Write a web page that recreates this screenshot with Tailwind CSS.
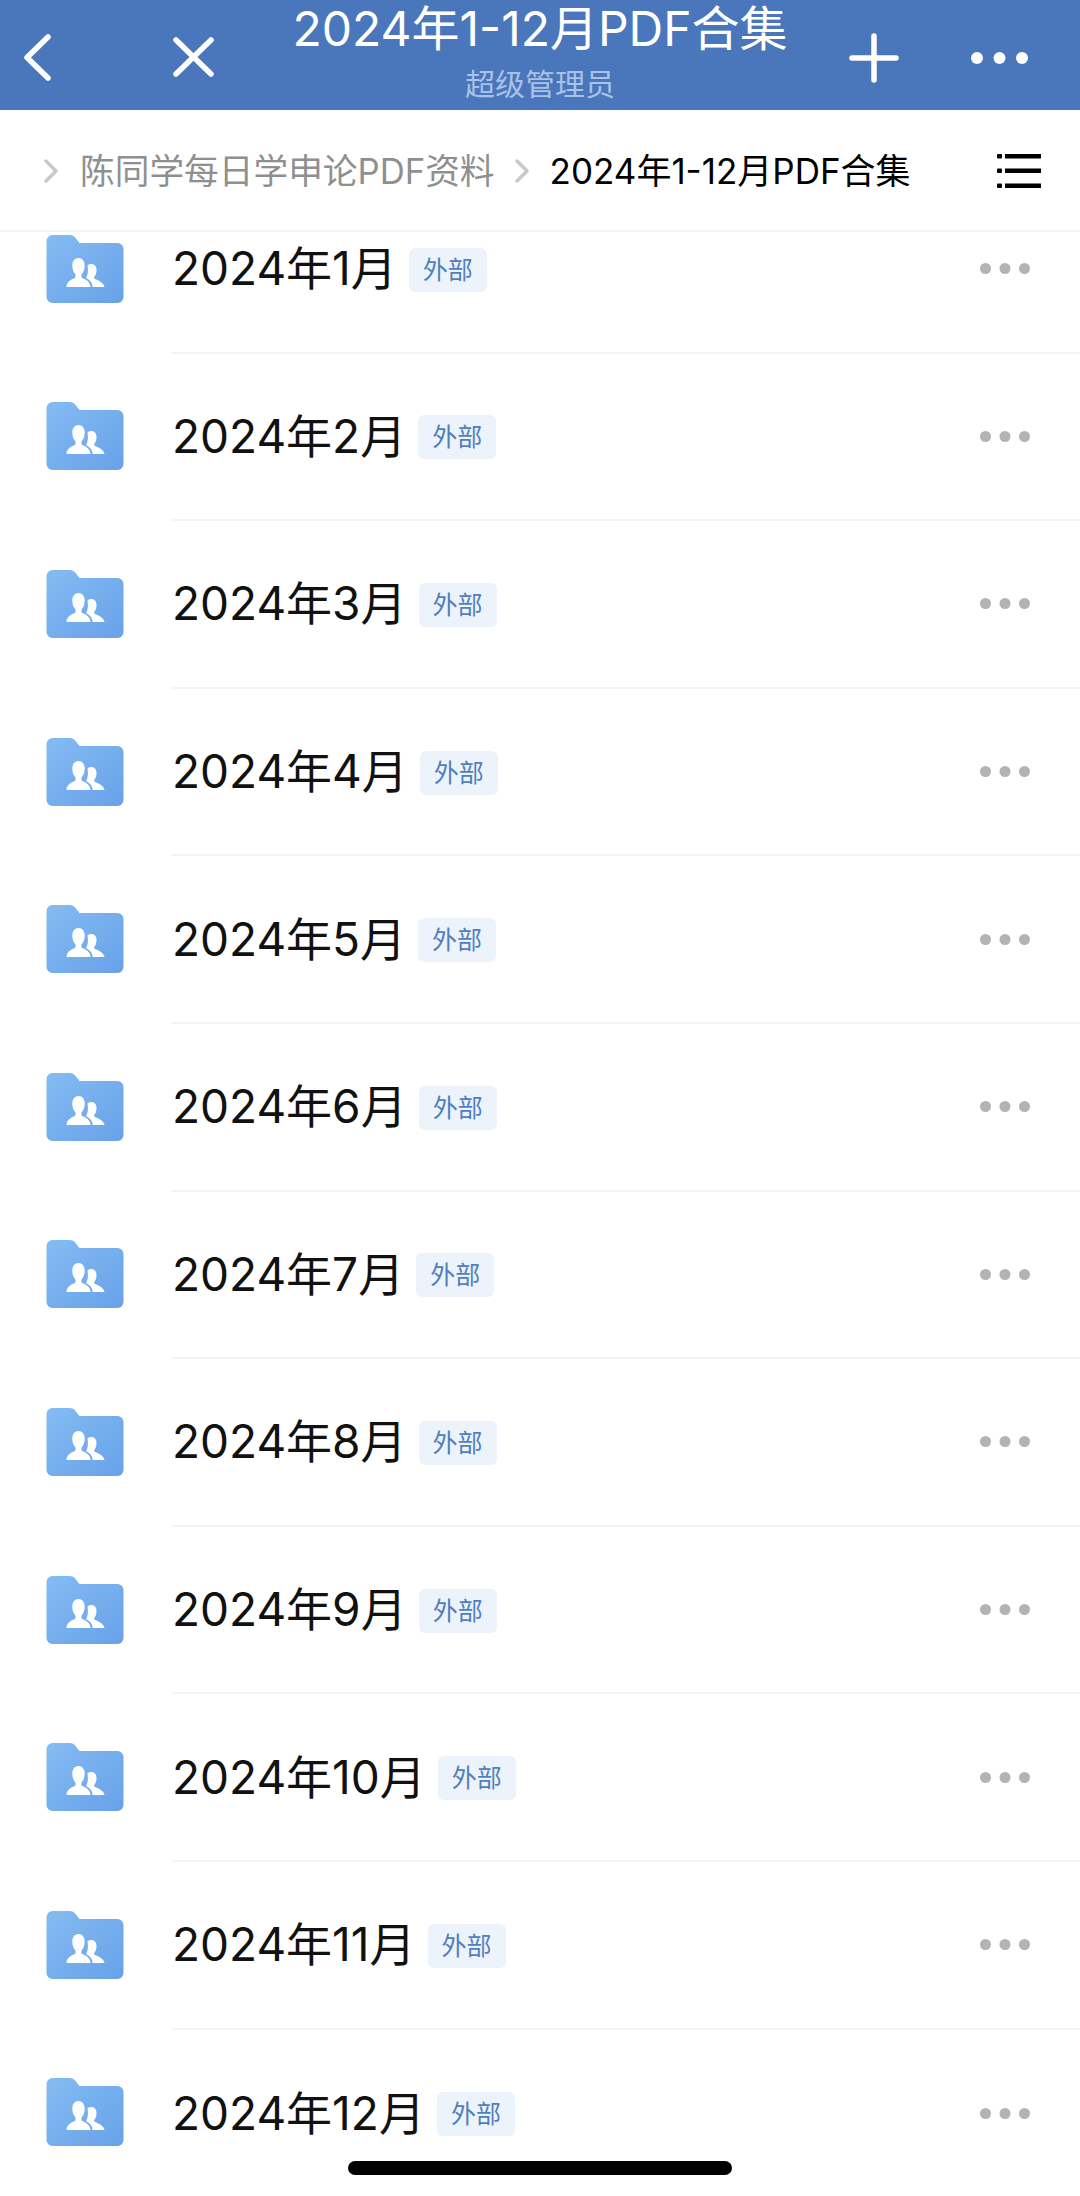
<!DOCTYPE html>
<html lang="zh-CN">
<head>
    <meta charset="UTF-8">
    <meta name="viewport" content="width=device-width, initial-scale=1.0">
    <title>2024年1-12月PDF合集</title>
    <script src="https://cdn.jsdelivr.net/npm/@tailwindcss/browser@4"></script>
</head>
<body class="relative h-[2196px] overflow-hidden bg-white font-['Inter','Noto_Sans_CJK_SC',sans-serif]">
    <svg class="absolute h-0 w-0">
        <defs>
            <linearGradient id="folderFill" x1="0" y1="0" x2="1" y2="1">
                <stop offset="0" stop-color="#84bcf3"/>
                <stop offset="1" stop-color="#68a1e8"/>
            </linearGradient>
            <symbol id="folder" viewBox="0 0 77 68">
                <path fill="url(#folderFill)" d="M0 6a6 6 0 0 1 6-6h17q4 0 6 3l4 5h38a6 6 0 0 1 6 6v48a6 6 0 0 1-6 6H6a6 6 0 0 1-6-6z"/>
                <path fill="#fff" d="M20 52c0-5 4-7 9-9.500v-3c-2-2-3.200-5-3.200-9 0-4.500 2.500-7.500 6.200-7.500s6.200 3 6.200 7.500c0 4-1.200 7-3.200 9v3c5 2.500 9 4.500 9 9.500z"/>
                <path fill="#fff" d="M41 30.500c1-1 2.300-1.500 3.800-1.500 3.300 0 5.200 2.500 5.200 6 0 3-.8 5.200-2.200 6.800v2c4 1.500 9.200 3.700 10.200 8.200h-12c0-4.500-2.500-6.500-6.500-9 1.500-2.500 2.500-6 1.500-12.500z"/>
            </symbol>
            <symbol id="more" viewBox="0 0 50 11">
                <circle cx="5.500" cy="5.500" r="5.500" fill="#b3b3b3"/>
                <circle cx="25" cy="5.500" r="5.500" fill="#b3b3b3"/>
                <circle cx="44.500" cy="5.500" r="5.500" fill="#b3b3b3"/>
            </symbol>
        </defs>
    </svg>

    <header class="grid h-[110px] grid-cols-[250px_1fr_250px] items-center bg-[#4a76bc] text-white">
        <div class="flex items-center pl-[23px] pt-[4px]">
            <svg class="h-[47px] w-[29px]" viewBox="0 0 29 47" fill="none" stroke="#fff" stroke-width="5.500" stroke-linecap="round" stroke-linejoin="round"><path d="M25 3 4 23.500 25 44"/></svg>
            <svg class="ml-[120px] h-[42px] w-[43px]" viewBox="0 0 43 42" fill="none" stroke="#fff" stroke-width="5.500" stroke-linecap="round"><path d="M4 4l35 34M39 4 4 38"/></svg>
        </div>
        <div class="flex flex-col items-center self-start pt-[1px]">
            <div class="text-[48px] leading-[56px] whitespace-nowrap">2024年1-12月PDF合集</div>
            <div class="mt-[9px] text-[30px] leading-[36px] text-[#a9c2e8]">超级管理员</div>
        </div>
        <div class="flex items-center justify-end pr-[52px] pt-[6px]">
            <svg class="h-[50px] w-[50px]" viewBox="0 0 50 50" fill="none" stroke="#fff" stroke-width="5.500" stroke-linecap="round"><path d="M25 3v44M3 25h44"/></svg>
            <svg class="ml-[72px] h-[12px] w-[57px]" viewBox="0 0 57 12" fill="#fff"><circle cx="6" cy="6" r="6"/><circle cx="28.500" cy="6" r="6"/><circle cx="51" cy="6" r="6"/></svg>
        </div>
    </header>

    <nav class="relative z-10 flex h-[122px] items-center border-b-2 border-[#f3f3f3] bg-white pl-[43px] pr-[39px] pt-[2px]">
        <svg class="h-[26px] w-[16px]" viewBox="0 0 16 26" fill="none" stroke="#c9c9c9" stroke-width="3.500" stroke-linecap="round" stroke-linejoin="round"><path d="M3 3l10 10L3 23"/></svg>
        <span class="ml-[21px] text-[34.700px] whitespace-nowrap text-[#8f8f8f]">陈同学每日学申论PDF资料</span>
        <svg class="ml-[19px] h-[26px] w-[16px]" viewBox="0 0 16 26" fill="none" stroke="#c9c9c9" stroke-width="3.500" stroke-linecap="round" stroke-linejoin="round"><path d="M3 3l10 10L3 23"/></svg>
        <span class="ml-[20px] text-[35px] whitespace-nowrap text-black">2024年1-12月PDF合集</span>
        <svg class="ml-auto h-[34px] w-[44px]" viewBox="0 0 44 34" fill="#000"><rect y="0" width="5" height="4.500" rx="1"/><rect x="8" y="0" width="36" height="4.500"/><rect y="14.500" width="5" height="4.500" rx="1"/><rect x="8" y="14.500" width="36" height="4.500"/><rect y="29.500" width="5" height="4.500" rx="1"/><rect x="8" y="29.500" width="36" height="4.500"/></svg>
    </nav>

    <ul class="mt-[-46px]">
        <li class="flex h-[167.600px] items-center pl-[46px]">
            <svg class="mt-[-2px] h-[68px] w-[78px] shrink-0"><use href="#folder"/></svg>
            <div class="ml-[48px] flex h-full flex-1 items-center border-b-2 border-[#f3f3f3] pr-[50px]">
                <span class="text-[46px] text-[#111]">2024年1月</span>
                <span class="ml-[12px] mt-[2px] rounded-[6px] bg-[#edf3fb] px-[14px] py-[5px] text-[25px] leading-[34px] text-[#4f7fbd]">外部</span>
                <svg class="ml-auto h-[11px] w-[50px]"><use href="#more"/></svg>
            </div>
        </li>
        <li class="flex h-[167.600px] items-center pl-[46px]">
            <svg class="mt-[-2px] h-[68px] w-[78px] shrink-0"><use href="#folder"/></svg>
            <div class="ml-[48px] flex h-full flex-1 items-center border-b-2 border-[#f3f3f3] pr-[50px]">
                <span class="text-[46px] text-[#111]">2024年2月</span>
                <span class="ml-[12px] mt-[2px] rounded-[6px] bg-[#edf3fb] px-[14px] py-[5px] text-[25px] leading-[34px] text-[#4f7fbd]">外部</span>
                <svg class="ml-auto h-[11px] w-[50px]"><use href="#more"/></svg>
            </div>
        </li>
        <li class="flex h-[167.600px] items-center pl-[46px]">
            <svg class="mt-[-2px] h-[68px] w-[78px] shrink-0"><use href="#folder"/></svg>
            <div class="ml-[48px] flex h-full flex-1 items-center border-b-2 border-[#f3f3f3] pr-[50px]">
                <span class="text-[46px] text-[#111]">2024年3月</span>
                <span class="ml-[12px] mt-[2px] rounded-[6px] bg-[#edf3fb] px-[14px] py-[5px] text-[25px] leading-[34px] text-[#4f7fbd]">外部</span>
                <svg class="ml-auto h-[11px] w-[50px]"><use href="#more"/></svg>
            </div>
        </li>
        <li class="flex h-[167.600px] items-center pl-[46px]">
            <svg class="mt-[-2px] h-[68px] w-[78px] shrink-0"><use href="#folder"/></svg>
            <div class="ml-[48px] flex h-full flex-1 items-center border-b-2 border-[#f3f3f3] pr-[50px]">
                <span class="text-[46px] text-[#111]">2024年4月</span>
                <span class="ml-[12px] mt-[2px] rounded-[6px] bg-[#edf3fb] px-[14px] py-[5px] text-[25px] leading-[34px] text-[#4f7fbd]">外部</span>
                <svg class="ml-auto h-[11px] w-[50px]"><use href="#more"/></svg>
            </div>
        </li>
        <li class="flex h-[167.600px] items-center pl-[46px]">
            <svg class="mt-[-2px] h-[68px] w-[78px] shrink-0"><use href="#folder"/></svg>
            <div class="ml-[48px] flex h-full flex-1 items-center border-b-2 border-[#f3f3f3] pr-[50px]">
                <span class="text-[46px] text-[#111]">2024年5月</span>
                <span class="ml-[12px] mt-[2px] rounded-[6px] bg-[#edf3fb] px-[14px] py-[5px] text-[25px] leading-[34px] text-[#4f7fbd]">外部</span>
                <svg class="ml-auto h-[11px] w-[50px]"><use href="#more"/></svg>
            </div>
        </li>
        <li class="flex h-[167.600px] items-center pl-[46px]">
            <svg class="mt-[-2px] h-[68px] w-[78px] shrink-0"><use href="#folder"/></svg>
            <div class="ml-[48px] flex h-full flex-1 items-center border-b-2 border-[#f3f3f3] pr-[50px]">
                <span class="text-[46px] text-[#111]">2024年6月</span>
                <span class="ml-[12px] mt-[2px] rounded-[6px] bg-[#edf3fb] px-[14px] py-[5px] text-[25px] leading-[34px] text-[#4f7fbd]">外部</span>
                <svg class="ml-auto h-[11px] w-[50px]"><use href="#more"/></svg>
            </div>
        </li>
        <li class="flex h-[167.600px] items-center pl-[46px]">
            <svg class="mt-[-2px] h-[68px] w-[78px] shrink-0"><use href="#folder"/></svg>
            <div class="ml-[48px] flex h-full flex-1 items-center border-b-2 border-[#f3f3f3] pr-[50px]">
                <span class="text-[46px] text-[#111]">2024年7月</span>
                <span class="ml-[12px] mt-[2px] rounded-[6px] bg-[#edf3fb] px-[14px] py-[5px] text-[25px] leading-[34px] text-[#4f7fbd]">外部</span>
                <svg class="ml-auto h-[11px] w-[50px]"><use href="#more"/></svg>
            </div>
        </li>
        <li class="flex h-[167.600px] items-center pl-[46px]">
            <svg class="mt-[-2px] h-[68px] w-[78px] shrink-0"><use href="#folder"/></svg>
            <div class="ml-[48px] flex h-full flex-1 items-center border-b-2 border-[#f3f3f3] pr-[50px]">
                <span class="text-[46px] text-[#111]">2024年8月</span>
                <span class="ml-[12px] mt-[2px] rounded-[6px] bg-[#edf3fb] px-[14px] py-[5px] text-[25px] leading-[34px] text-[#4f7fbd]">外部</span>
                <svg class="ml-auto h-[11px] w-[50px]"><use href="#more"/></svg>
            </div>
        </li>
        <li class="flex h-[167.600px] items-center pl-[46px]">
            <svg class="mt-[-2px] h-[68px] w-[78px] shrink-0"><use href="#folder"/></svg>
            <div class="ml-[48px] flex h-full flex-1 items-center border-b-2 border-[#f3f3f3] pr-[50px]">
                <span class="text-[46px] text-[#111]">2024年9月</span>
                <span class="ml-[12px] mt-[2px] rounded-[6px] bg-[#edf3fb] px-[14px] py-[5px] text-[25px] leading-[34px] text-[#4f7fbd]">外部</span>
                <svg class="ml-auto h-[11px] w-[50px]"><use href="#more"/></svg>
            </div>
        </li>
        <li class="flex h-[167.600px] items-center pl-[46px]">
            <svg class="mt-[-2px] h-[68px] w-[78px] shrink-0"><use href="#folder"/></svg>
            <div class="ml-[48px] flex h-full flex-1 items-center border-b-2 border-[#f3f3f3] pr-[50px]">
                <span class="text-[46px] text-[#111]">2024年10月</span>
                <span class="ml-[12px] mt-[2px] rounded-[6px] bg-[#edf3fb] px-[14px] py-[5px] text-[25px] leading-[34px] text-[#4f7fbd]">外部</span>
                <svg class="ml-auto h-[11px] w-[50px]"><use href="#more"/></svg>
            </div>
        </li>
        <li class="flex h-[167.600px] items-center pl-[46px]">
            <svg class="mt-[-2px] h-[68px] w-[78px] shrink-0"><use href="#folder"/></svg>
            <div class="ml-[48px] flex h-full flex-1 items-center border-b-2 border-[#f3f3f3] pr-[50px]">
                <span class="text-[46px] text-[#111]">2024年11月</span>
                <span class="ml-[12px] mt-[2px] rounded-[6px] bg-[#edf3fb] px-[14px] py-[5px] text-[25px] leading-[34px] text-[#4f7fbd]">外部</span>
                <svg class="ml-auto h-[11px] w-[50px]"><use href="#more"/></svg>
            </div>
        </li>
        <li class="flex h-[167.600px] items-center pl-[46px]">
            <svg class="mt-[-2px] h-[68px] w-[78px] shrink-0"><use href="#folder"/></svg>
            <div class="ml-[48px] flex h-full flex-1 items-center pr-[50px]">
                <span class="text-[46px] text-[#111]">2024年12月</span>
                <span class="ml-[12px] mt-[2px] rounded-[6px] bg-[#edf3fb] px-[14px] py-[5px] text-[25px] leading-[34px] text-[#4f7fbd]">外部</span>
                <svg class="ml-auto h-[11px] w-[50px]"><use href="#more"/></svg>
            </div>
        </li>
    </ul>

    <!-- home indicator -->
    <div class="absolute bottom-[21px] left-[348px] h-[14px] w-[384px] rounded-full bg-black"></div>
</body>
</html>
